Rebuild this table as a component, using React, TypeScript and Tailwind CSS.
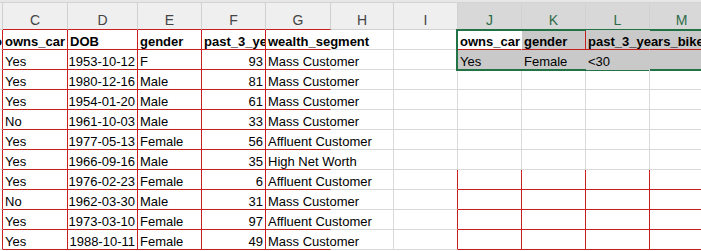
import React from 'react';

const WIDTHS = ['w-[3px]', 'w-[65px]', 'w-[70px]', 'w-[64px]', 'w-[64px]', 'w-[65px]', 'w-[63px]', 'w-[64px]', 'w-[64px]', 'w-[64px]', 'w-[64px]', 'w-[64px]'];
const LETTERS = ['', 'C', 'D', 'E', 'F', 'G', 'H', 'I', 'J', 'K', 'L', 'M'];

const rows: string[][] = [
  ['', 'owns_car', 'DOB', 'gender', 'past_3_years_bike_related_purchases', 'wealth_segment', '', '', 'owns_car', 'gender', 'past_3_years_bike_related_purchases', ''],
  ['', 'Yes', '1953-10-12', 'F', '93', 'Mass Customer', '', '', 'Yes', 'Female', '<30', ''],
  ['', 'Yes', '1980-12-16', 'Male', '81', 'Mass Customer', '', '', '', '', '', ''],
  ['', 'Yes', '1954-01-20', 'Male', '61', 'Mass Customer', '', '', '', '', '', ''],
  ['', 'No', '1961-10-03', 'Male', '33', 'Mass Customer', '', '', '', '', '', ''],
  ['', 'Yes', '1977-05-13', 'Female', '56', 'Affluent Customer', '', '', '', '', '', ''],
  ['', 'Yes', '1966-09-16', 'Male', '35', 'High Net Worth', '', '', '', '', '', ''],
  ['', 'Yes', '1976-02-23', 'Female', '6', 'Affluent Customer', '', '', '', '', '', ''],
  ['', 'No', '1962-03-30', 'Male', '31', 'Mass Customer', '', '', '', '', '', ''],
  ['', 'Yes', '1973-03-10', 'Female', '97', 'Affluent Customer', '', '', '', '', '', ''],
  ['', 'Yes', '1988-10-11', 'Female', '49', 'Mass Customer', '', '', '', '', '', ''],
];

// each cell draws its right and bottom gridline
function cellClasses(r: number, c: number): string {
  if (r <= 1 && c >= 8) {
    if (r === 1) return 'border-r border-b border-[#c9c9c9] bg-[#c9c9c9]';
    if (c === 8) return 'border-r border-b border-[#c81e1e] border-r-white bg-white';
    if (c === 9) return 'border-r border-b border-[#c81e1e] bg-[#c9c9c9]';
    return 'border-r border-b border-[#c81e1e] border-r-[#c9c9c9] bg-[#c9c9c9]';
  }
  if (c === 0) return 'border-r border-b border-[#d9d9d9] border-r-[#c81e1e]';
  if (c <= 4) return 'border-r border-b border-[#c81e1e]';
  if (c === 5) return 'border-r border-b border-[#c81e1e] border-r-transparent';
  if (r >= 7 && c === 7) return 'border-r border-b border-[#d9d9d9] border-r-[#c81e1e]';
  if (r >= 7 && c >= 8) return 'border-r border-b border-[#c81e1e]';
  return 'border-r border-b border-[#d9d9d9]';
}

function Cell({ r, c, value }: { r: number; c: number; value: string }) {
  const header = r === 0;
  const align = c === 0 || (!header && (c === 2 || c === 4)) ? 'justify-end' : 'justify-start';
  const overflow = c === 5 || c === 10 ? 'overflow-visible relative z-10' : 'overflow-hidden';
  const pad = c === 0 ? 'px-0' : 'px-[2px]';
  return (
    <div
      className={`${WIDTHS[c]} shrink-0 h-[20px] flex items-end leading-[14px] whitespace-nowrap ${pad} ${align} ${overflow} ${cellClasses(r, c)} ${header ? 'font-bold' : ''}`}
    >
      {c === 0 && r === 0 ? <span className="font-bold">o</span> : value}
    </div>
  );
}

export default function App() {
  return (
    <div className="relative w-[701px] h-[251px] overflow-hidden bg-white text-[13px] text-black [font-family:'Liberation_Sans',Arial,sans-serif]">
      <div className="h-[3px] bg-[#e6e6e6] border-b border-[#d4d4d4]" />
      <div className="flex h-[27px]">
        {LETTERS.map((l, c) => {
          const sel = c >= 8;
          const lines = c >= 1 && c <= 5 ? 'border-[#d0d0d0] border-b-[#c81e1e]' : 'border-[#d0d0d0]';
          return (
            <div
              key={c}
              className={`${WIDTHS[c]} shrink-0 h-[27px] flex items-end justify-center pb-[1px] border-r border-b ${lines} ${
                sel ? 'bg-[#d8d8d8] text-[#2e6b48]' : 'bg-[#efefef] text-[#444]'
              } text-[14px] leading-[16px]`}
            >
              {l}
            </div>
          );
        })}
      </div>
      {rows.map((row, r) => (
        <div key={r} className="flex">
          {row.map((v, c) => (
            <Cell key={c} r={r} c={c} value={v} />
          ))}
        </div>
      ))}
      <div className="absolute left-[456px] top-[29px] w-[270px] h-[42px] border-2 border-[#217346] pointer-events-none" />
    </div>
  );
}
